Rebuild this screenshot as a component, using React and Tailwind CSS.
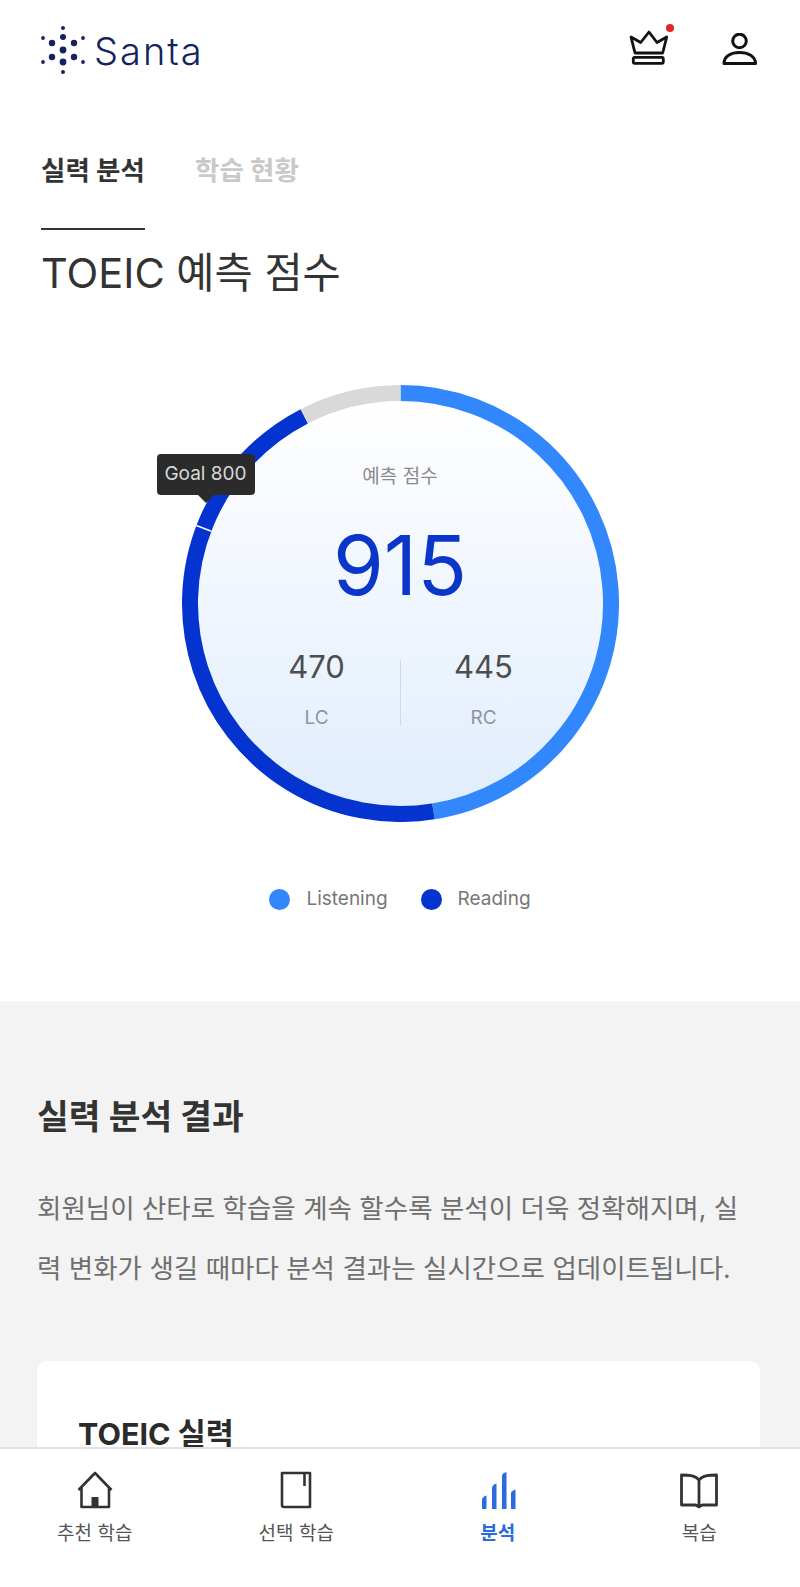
const FONT = "font-['Inter','Noto_Sans_CJK_KR',sans-serif]";

const R = 210.5;
const CX = 218.5;

function arcPath(from, to) {
  const a = ((from - 90) * Math.PI) / 180;
  const b = ((to - 90) * Math.PI) / 180;
  const large = to - from > 180 ? 1 : 0;
  return `M ${CX + R * Math.cos(a)} ${CX + R * Math.sin(a)} A ${R} ${R} 0 ${large} 1 ${CX + R * Math.cos(b)} ${CX + R * Math.sin(b)}`;
}

function Logo() {
  const dots = [
    [22, 3, 2], [22, 12, 3], [22, 25, 3.4], [22, 37, 3.4], [22, 47, 2],
    [11, 18, 3.2], [33, 18, 3.2], [11, 32, 3.2], [33, 32, 3.2],
    [2, 13, 1.9], [42, 13, 1.9], [2, 37, 1.9], [42, 37, 1.9],
  ];
  return (
    <svg width="44" height="50" viewBox="0 0 44 50" fill="#14235f">
      {dots.map(([x, y, r]) => (
        <circle key={`${x}-${y}`} cx={x} cy={y} r={r} />
      ))}
    </svg>
  );
}

function CrownIcon() {
  return (
    <div className="relative w-[44px] h-[40px] mb-[4px]">
      <svg width="44" height="40" viewBox="0 0 44 40" fill="none" stroke="#111" strokeWidth="2.8" strokeLinejoin="round">
        <path d="M3 9 L12.7 14.5 L21 4 L29 14.5 L38.7 9 L34.7 25 H7 Z" />
        <rect x="5.3" y="29.3" width="30" height="6" rx="1.5" />
      </svg>
      <span className="absolute top-[-4px] left-[38px] w-[8px] h-[8px] rounded-full bg-[#e0262b]" />
    </div>
  );
}

function PersonIcon() {
  return (
    <svg width="36" height="34" viewBox="0 0 36 34" fill="none" stroke="#111" strokeWidth="3">
      <circle cx="17.5" cy="8" r="6.8" />
      <path d="M2 30.5 C2 23 9 19.5 17.5 19.5 C26 19.5 33.5 23 33.5 30.5 Z" strokeLinejoin="round" />
    </svg>
  );
}

function HomeIcon() {
  return (
    <svg width="36" height="38" viewBox="0 0 36 38" fill="none" stroke="#333" strokeWidth="2.6" strokeLinejoin="round">
      <path d="M1.5 19 L18 2 L34.5 19" />
      <path d="M4.5 16 V36 H32 V16" />
      <rect x="14.5" y="26" width="7" height="10" fill="#333" stroke="none" />
    </svg>
  );
}

function NoteIcon() {
  return (
    <svg width="32" height="38" viewBox="0 0 32 38" fill="none" stroke="#333" strokeWidth="2.6" strokeLinejoin="round">
      <path d="M2 2 H30 V36 H4 Q2 36 2 34 Z" />
      <path d="M24.5 2 V15" />
    </svg>
  );
}

function BarsIcon() {
  return (
    <svg className="ml-[2px]" width="34" height="37" viewBox="0 0 34 37" fill="#2a6be0">
      <path d="M0 37 V28 Q0 25 4.5 23.5 V37 Z" />
      <path d="M10 37 V16 Q10 13 14.5 11.5 V37 Z" />
      <path d="M20 37 V4 Q20 1 24.5 0 V37 Z" />
      <path d="M29 37 V21 Q29 19 33.5 17.5 V37 Z" />
    </svg>
  );
}

function BookIcon() {
  return (
    <svg width="38" height="36" viewBox="0 0 38 36" fill="none" stroke="#333" strokeWidth="2.8" strokeLinejoin="round">
      <path d="M19 7 C15 2 8 2 1.5 2 V32 H15 Q17 32 19 34 Q21 32 23 32 H36.5 V2 C30 2 23 2 19 7 Z" />
      <path d="M19 7 V33" />
    </svg>
  );
}

const navItems = [
  { label: "추천 학습", icon: <HomeIcon /> },
  { label: "선택 학습", icon: <NoteIcon /> },
  { label: "분석", icon: <BarsIcon />, active: true },
  { label: "복습", icon: <BookIcon /> },
];

function ScoreRing() {
  return (
    <div className="relative w-[437px] h-[437px] mx-auto">
      <div className="absolute inset-[14px] rounded-full bg-linear-to-b from-white to-[#e1edfd]" />
      <svg className="absolute inset-0" width="437" height="437" viewBox="0 0 437 437" fill="none" strokeWidth="16">
        <path d={arcPath(0, 171)} stroke="#3187fb" />
        <path d={arcPath(171, 332.8)} stroke="#0433cf" />
        <path d={arcPath(332.8, 360)} stroke="#d9d9d9" />
        <path d={arcPath(290.7, 291.1)} stroke="#fff" />
      </svg>

      <div className="absolute top-[69px] left-[-25px] w-[98px] h-[41px] rounded-[4px] bg-[#2b2b2b] text-[#d8d8d8] text-[19px] flex items-center justify-center">
        Goal 800
        <span className="absolute top-[41px] left-[41px] w-0 h-0 border-x-[8px] border-x-transparent border-t-[8px] border-t-[#2b2b2b]" />
      </div>

      <div className="relative flex flex-col items-center pt-[78px]">
        <p className="text-[19px] leading-[28px] text-[#8a8a8a]">예측 점수</p>
        <p className="mt-[30px] text-[82px] leading-[90px] text-[#0a36c9]">915</p>
        <div className="mt-[36px] flex items-start">
          <div className="w-[166px] flex flex-col items-center">
            <span className="text-[31px] leading-[40px] text-[#4d4d4d]">470</span>
            <span className="mt-[18px] text-[19px] leading-[26px] text-[#8f949b]">LC</span>
          </div>
          <div className="w-px h-[66px] mt-[13px] bg-[#d6d8db]" />
          <div className="w-[166px] flex flex-col items-center">
            <span className="text-[31px] leading-[40px] text-[#4d4d4d]">445</span>
            <span className="mt-[18px] text-[19px] leading-[26px] text-[#8f949b]">RC</span>
          </div>
        </div>
      </div>
    </div>
  );
}

export default function App() {
  return (
    <div className={`${FONT} w-[800px] h-[1587px] flex flex-col overflow-hidden bg-white`}>
      <main className="flex-1 min-h-0 overflow-hidden">
        <header className="h-[100px] pl-[41px] pr-[42px] flex items-center justify-between">
          <div className="flex items-center gap-[9px]">
            <Logo />
            <span className="mt-[2px] text-[38px] font-light tracking-[2px] leading-none text-[#14235f]">Santa</span>
          </div>
          <div className="flex items-center gap-[50px]">
            <CrownIcon />
            <PersonIcon />
          </div>
        </header>

        <nav className="pl-[41px] pt-[50px] flex gap-[50px] text-[26.5px] leading-[40px] font-bold">
          <div className="w-[104px] whitespace-nowrap text-[#333]">실력 분석</div>
          <div className="whitespace-nowrap text-[#c9c9c9]">학습 현황</div>
        </nav>
        <div className="ml-[41px] mt-[38px] w-[104px] h-[2px] bg-[#333]" />

        <h1 className="pl-[41px] mt-[13px] text-[41.5px] leading-[60px] text-[#333]">TOEIC 예측 점수</h1>

        <div className="mt-[82px]">
          <ScoreRing />
        </div>

        <div className="mt-[58px] flex justify-center gap-[33px] text-[19px] leading-[38px] text-[#777]">
          <div className="flex items-center gap-[16px]">
            <span className="w-[21px] h-[21px] rounded-full bg-[#3187fb]" />
            Listening
          </div>
          <div className="flex items-center gap-[16px]">
            <span className="w-[21px] h-[21px] rounded-full bg-[#0433cf]" />
            Reading
          </div>
        </div>

        <section className="mt-[83px] bg-[#f3f3f3] px-[37px] pt-[87px] h-[600px]">
          <h2 className="text-[34.5px] leading-[58px] font-bold text-[#333]">실력 분석 결과</h2>
          <p className="mt-[32px] w-[715px] text-[26.5px] leading-[60px] text-[#6f6f6f] break-all">
            회원님이 산타로 학습을 계속 할수록 분석이 더욱 정확해지며, 실력 변화가 생길 때마다 분석 결과는 실시간으로 업데이트됩니다.
          </p>
          <div className="mt-[63px] w-[723px] h-[300px] bg-white rounded-[10px] pl-[41px] pt-[51px]">
            <h3 className="text-[30.5px] leading-[44px] font-bold text-[#2b2b2b]">TOEIC 실력</h3>
          </div>
        </section>
      </main>

      <footer className="h-[140px] shrink-0 bg-white border-t-2 border-[#e2e2e2] overflow-hidden">
        <div className="grid grid-cols-4 w-[806px] ml-[-6px]">
          {navItems.map((item) => (
            <div key={item.label} className="flex flex-col items-center pt-[20px]">
              <div className="h-[40px] flex items-end">{item.icon}</div>
              <span className={`mt-[11px] text-[19px] leading-[28px] ${item.active ? "font-bold text-[#2a6be0]" : "text-[#555]"}`}>
                {item.label}
              </span>
            </div>
          ))}
        </div>
      </footer>
    </div>
  );
}
